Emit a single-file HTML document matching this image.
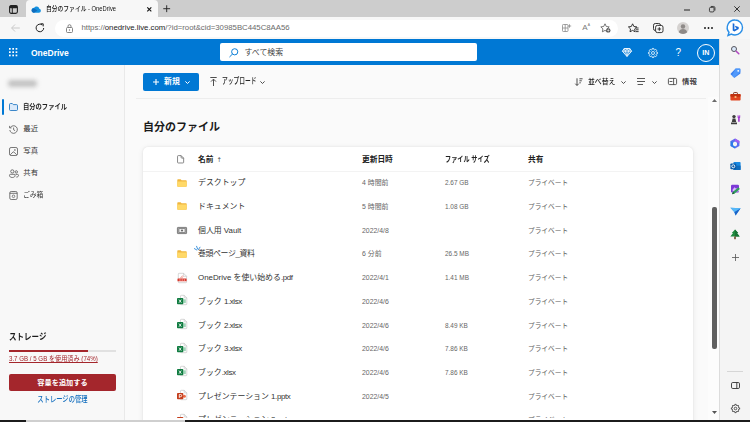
<!DOCTYPE html>
<html lang="ja">
<head>
<meta charset="utf-8">
<title>自分のファイル - OneDrive</title>
<style>
*{box-sizing:border-box;margin:0;padding:0}
html,body{width:750px;height:422px;overflow:hidden;background:#fafafa}
body{position:relative;font-family:"Liberation Sans","Noto Sans CJK JP",sans-serif;color:#242424;font-size:8px;line-height:1}
.a{position:absolute;white-space:nowrap}
.t{position:absolute;white-space:nowrap;line-height:10px;height:10px}
svg{position:absolute;overflow:visible}
.nk{display:inline-block;transform-origin:0 50%}

/* browser chrome */
#tabstrip{left:0;top:0;width:750px;height:17px;background:#cdcdcd}
#tab{left:26px;top:0;width:132px;height:18px;background:#f7f7f7;border-radius:4px 4px 0 0}
#toolbar{left:0;top:17px;width:750px;height:22px;background:#f7f7f7}
#addr{left:55px;top:19.5px;width:563px;height:17px;background:#fff;border-radius:8.5px}

/* onedrive */
#hdr{left:0;top:39px;width:719px;height:26px;background:#0078d4}
#search{left:220px;top:43px;width:257px;height:18px;background:#fff;border-radius:2px}
#nav{left:0;top:65px;width:125px;height:357px;background:#f8f8f8;border-right:1px solid #e9e9e9}
#main{left:125px;top:65px;width:594px;height:357px;background:#fafafa}
#card{left:143px;top:146.5px;width:550px;height:290px;background:#fff;border-radius:5px;box-shadow:0 0 2px rgba(0,0,0,.09),0 1px 6px rgba(0,0,0,.07)}
#edge{left:719px;top:39px;width:31px;height:383px;background:#f4f4f4;border-left:1px solid #dcdcdc}
#sb{left:708px;top:97px;width:11px;height:323px;background:#fcfcfc}
#thumb{left:712.3px;top:207px;width:4.8px;height:142px;background:#5f5f5f;border-radius:2px}
.name,.sec,.shr,.hd{margin-top:.8px}
.name{font-size:7.9px;color:#333}
.sec.sz{font-size:6.45px}
.lx{letter-spacing:-.36px}
.sec{font-size:6.9px;color:#666}
.shr{font-size:6.7px;color:#5c5c5c}
.hd{font-size:7.7px;font-weight:bold;color:#222}
.navt{font-size:7.4px;color:#333}
</style>
</head>
<body>

<!-- ============ Browser chrome ============ -->
<div class="a" id="tabstrip"></div>
<div class="a" id="tab"></div>
<div class="a" id="toolbar"></div>
<div class="a" id="addr"></div>

<!-- tab actions icon -->
<svg style="left:9px;top:5px" width="9" height="9" viewBox="0 0 9 9"><rect x=".6" y=".6" width="7.8" height="7.8" rx="1.6" fill="none" stroke="#222" stroke-width="1.1"/><rect x=".6" y=".6" width="7.8" height="2.6" rx="1.2" fill="#222"/><path d="M3.3 3v5.4" stroke="#222" stroke-width="1"/></svg>
<!-- onedrive cloud favicon -->
<svg style="left:31px;top:5.5px" width="10" height="7" viewBox="0 0 20 13"><path d="M5.2 12.8h10.6a4 4 0 0 0 .9-7.9A5.6 5.6 0 0 0 6.400 3.100 4.900 4.900 0 0 0 5.200 12.800z" fill="#1490df"/><path d="M1 8.600a4.200 4.200 0 0 1 5.400-4.000L13 8.500 6.000 12.800H5.200A4.200 4.200 0 0 1 1 8.600z" fill="#0f6cbd"/></svg>
<div class="t" style="left:46px;top:4px;font-size:6.8px;color:#111;font-weight:500"><span class="nk" id="tabtitle" style="transform:scaleX(.85)">自分のファイル - OneDrive</span></div>
<!-- tab close -->
<svg style="left:146.700px;top:6.700px" width="4.600" height="4.600" viewBox="0 0 5 5"><path d="M.3.3l4.400 4.400M4.700.3L.3 4.700" stroke="#111" stroke-width="1.200"/></svg>
<!-- new tab plus -->
<svg style="left:163.300px;top:5px" width="7.400" height="7.400" viewBox="0 0 8 8"><path d="M4 .3v7.400M.3 4h7.400" stroke="#222" stroke-width="1"/></svg>
<!-- window controls -->
<svg style="left:684px;top:8.500px" width="6" height="2" viewBox="0 0 6 2"><path d="M0 1h6" stroke="#333" stroke-width="1.100"/></svg>
<svg style="left:708.800px;top:5.800px" width="6.400" height="6.400" viewBox="0 0 7 7"><rect x=".5" y="1.500" width="5" height="5" rx="1.300" fill="none" stroke="#222" stroke-width=".9"/><path d="M2 .5h3a1.500 1.500 0 0 1 1.500 1.500v3" fill="none" stroke="#222" stroke-width=".9"/></svg>
<svg style="left:734px;top:6px" width="6" height="6" viewBox="0 0 6 6"><path d="M.3.3l5.400 5.400M5.700.3L.3 5.700" stroke="#222" stroke-width=".9"/></svg>

<!-- toolbar: back / reload -->
<svg style="left:11px;top:24px" width="9" height="8" viewBox="0 0 9 8"><path d="M4 .5L.6 4 4 7.500M.8 4h8" fill="none" stroke="#c9c9c9" stroke-width="1"/></svg>
<svg style="left:35px;top:23px" width="10" height="10" viewBox="0 0 10 10"><path d="M8.700 5A3.800 3.800 0 1 1 7.300 2" fill="none" stroke="#222" stroke-width="1"/><path d="M5.600.8h2.600v2.600" fill="none" stroke="#222" stroke-width="1"/></svg>
<!-- lock -->
<svg style="left:66px;top:23.500px" width="7" height="9" viewBox="0 0 7 9"><rect x=".5" y="3.500" width="6" height="5" rx="1" fill="none" stroke="#777" stroke-width=".9"/><path d="M2 3.500V2.200a1.500 1.500 0 0 1 3 0v1.300" fill="none" stroke="#777" stroke-width=".9"/><circle cx="3.500" cy="6" r=".7" fill="#777"/></svg>
<div class="t" id="url" style="left:81.500px;letter-spacing:-.015px;top:23px;font-size:7.800px;color:#6a6a6a">https://<span style="color:#1b1b1b">onedrive.live.com</span>/?id=root&amp;cid=30985BC445C8AA56</div>
<!-- addr right icons -->
<svg style="left:561.800px;top:24px" width="9" height="8" viewBox="0 0 9 8"><rect x=".5" y=".5" width="5.500" height="7" rx=".8" fill="none" stroke="#8a8a8a" stroke-width=".8"/><path d="M.5 4h5.500M3.200.5v7M7.500 .3v3.400M5.800 2h3.400" stroke="#8a8a8a" stroke-width=".8" fill="none"/></svg>
<div class="t" style="left:582.300px;top:23px;font-size:8px;color:#7a7a7a">A<span style="font-size:5px;position:relative;top:-3px">ᴬ</span></div>
<svg style="left:600px;top:23px" width="11" height="10" viewBox="0 0 11 10"><path d="M5 .8l1.300 2.700 2.900.4-2.100 2 .5 2.900L5 7.400 2.400 8.800l.5-2.900-2.100-2 2.900-.4z" fill="none" stroke="#555" stroke-width=".8"/><circle cx="8.300" cy="7.400" r="2.200" fill="#555"/><path d="M8.300 6.200v2.400M7.100 7.400h2.400" stroke="#fff" stroke-width=".6"/></svg>
<!-- favourites -->
<svg style="left:628px;top:23px" width="11" height="10" viewBox="0 0 11 10"><path d="M4.600.8l1.300 2.700 2.900.4-2.100 2 .5 2.900-2.600-1.400L2 8.800l.5-2.900-2.100-2 2.900-.4z" fill="none" stroke="#222" stroke-width=".9"/><path d="M7.600 5h3M7.900 6.800h2.700M8 8.600h2.600" stroke="#222" stroke-width=".9"/></svg>
<!-- collections -->
<svg style="left:653px;top:23px" width="11" height="10" viewBox="0 0 11 10"><rect x=".5" y=".5" width="7" height="7" rx="1.800" fill="none" stroke="#222" stroke-width=".9"/><rect x="2.600" y="2.400" width="7.400" height="7.200" rx="1.800" fill="#f7f7f7" stroke="#222" stroke-width=".9"/><path d="M6.300 4.200v3.600M4.500 6h3.600" stroke="#222" stroke-width=".9"/></svg>
<!-- profile -->
<svg style="left:677px;top:22px" width="12" height="12" viewBox="0 0 12 12"><circle cx="6" cy="6" r="6" fill="#d5d2d0"/><circle cx="6" cy="4.500" r="2.200" fill="#8e8a88"/><path d="M1.800 10.200a4.400 4.400 0 0 1 8.400 0A6 6 0 0 1 1.800 10.200z" fill="#8e8a88"/></svg>
<!-- ellipsis -->
<svg style="left:704px;top:27px" width="9" height="2" viewBox="0 0 9 2"><circle cx="1" cy="1" r=".95" fill="#111"/><circle cx="4.500" cy="1" r=".95" fill="#111"/><circle cx="8" cy="1" r=".95" fill="#111"/></svg>
<!-- bing -->
<svg style="left:726px;top:19px" width="18" height="18" viewBox="0 0 18 18"><path d="M9 1a7.500 7.500 0 0 1 0 15 7.500 7.500 0 0 1-3.600-.9L2 16.500l1-3.200A7.500 7.500 0 0 1 9 1z" fill="#fff" stroke="#2a8ee6" stroke-width="1.400"/><path d="M6.700 4.200l1.700.6v5.800l2.400-1.400-1.200-.6-.7-1.800 3.800 1.300v1.900l-4.300 2.500-1.700-1z" fill="#1769d6"/></svg>

<!-- ============ OneDrive ============ -->
<div class="a" id="hdr"></div>
<div class="a" id="search"></div>
<!-- waffle -->
<svg style="left:9px;top:48px" width="9" height="9" viewBox="0 0 9 9" fill="#fff"><rect x="0" y="0" width="1.700" height="1.700"/><rect x="3.300" y="0" width="1.700" height="1.700"/><rect x="6.600" y="0" width="1.700" height="1.700"/><rect x="0" y="3.300" width="1.700" height="1.700"/><rect x="3.300" y="3.300" width="1.700" height="1.700"/><rect x="6.600" y="3.300" width="1.700" height="1.700"/><rect x="0" y="6.600" width="1.700" height="1.700"/><rect x="3.300" y="6.600" width="1.700" height="1.700"/><rect x="6.600" y="6.600" width="1.700" height="1.700"/></svg>
<div class="t" id="brand" style="left:31px;top:47.500px;font-size:8.500px;font-weight:bold;color:#fff">OneDrive</div>
<!-- search icon + placeholder -->
<svg style="left:229px;top:48px" width="9.500" height="9.500" viewBox="0 0 8 8"><circle cx="4.800" cy="3.200" r="2.600" fill="none" stroke="#0078d4" stroke-width=".8"/><path d="M3 5L.4 7.600" stroke="#0078d4" stroke-width=".8"/></svg>
<div class="t" id="sph" style="left:244.500px;top:48px;font-size:7.900px;color:#444"><span class="nk" style="transform:scaleX(1)">すべて検索</span></div>
<!-- right header icons -->
<svg style="left:621.500px;top:48px" width="10" height="9" viewBox="0 0 10 9"><path d="M2.200.5h5.600L9.600 3.200 5 8.500.4 3.200z" fill="#fff" fill-opacity=".25" stroke="#fff" stroke-width=".9" stroke-linejoin="round"/><path d="M.4 3.200h9.200M3.400 3.200L5 8.300 6.600 3.200M2.200.5l1.200 2.700L5 .5l1.600 2.700L7.800.5" fill="none" stroke="#fff" stroke-width=".7" stroke-linejoin="round"/></svg>
<svg style="left:648px;top:47.500px" width="10" height="10" viewBox="0 0 10 10"><circle cx="5" cy="5" r="1.500" fill="none" stroke="#fff" stroke-width=".8"/><path d="M4.28 0.46L5.72 0.46L5.87 1.61L6.78 1.99L7.70 1.28L8.72 2.30L8.01 3.22L8.39 4.13L9.54 4.28L9.54 5.72L8.39 5.87L8.01 6.78L8.72 7.70L7.70 8.72L6.78 8.01L5.87 8.39L5.72 9.54L4.28 9.54L4.13 8.39L3.22 8.01L2.30 8.72L1.28 7.70L1.99 6.78L1.61 5.87L0.46 5.72L0.46 4.28L1.61 4.13L1.99 3.22L1.28 2.30L2.30 1.28L3.22 1.99L4.13 1.61z" fill="none" stroke="#fff" stroke-width=".8" stroke-linejoin="round"/></svg>
<div class="t" style="left:675.500px;top:47px;font-size:10px;color:#fff;line-height:11px;height:11px">?</div>
<div class="a" style="left:696.800px;top:43.500px;width:18px;height:18px;border:1px solid #fff;border-radius:50%"></div>
<div class="t" style="left:696.800px;top:47.600px;width:18px;text-align:center;font-size:7.100px;font-weight:bold;color:#fff">IN</div>
<div class="a" id="nav"></div>
<div class="a" style="left:8px;top:79.500px;width:29px;height:7px;background:#c2c2c2;filter:blur(2.200px);border-radius:3px"></div>
<div class="a" style="left:2px;top:99px;width:1.600px;height:15.500px;background:#0078d4;border-radius:1px"></div>
<svg style="left:9px;top:103px" width="9" height="8" viewBox="0 0 9 8"><path d="M.5 1.500a1 1 0 0 1 1-1h1.800l1 1.100h3.200a1 1 0 0 1 1 1v3.900a1 1 0 0 1-1 1h-6a1 1 0 0 1-1-1z" fill="#dbeafa" stroke="#0f6cbd" stroke-width=".8"/></svg>
<div class="t navt" style="left:23.300px;top:102px;font-weight:bold;color:#222;"><span class="nk" style="transform:scaleX(.85)">自分のファイル</span></div>
<svg style="left:9px;top:124.5px" width="9" height="9" viewBox="0 0 9 9"><path d="M1.300 2.600A3.800 3.800 0 1 1 .8 5" fill="none" stroke="#555" stroke-width=".8"/><path d="M.6.900v2h2M4.600 2.600v2.200l1.500.9" fill="none" stroke="#555" stroke-width=".8"/></svg>
<div class="t navt" style="left:23.300px;top:124px;"><span class="nk" style="transform:scaleX(1)">最近</span></div>
<svg style="left:9px;top:146.5px" width="9" height="9" viewBox="0 0 9 9"><rect x=".5" y=".5" width="8" height="8" rx="1.600" fill="none" stroke="#555" stroke-width=".8"/><circle cx="5.900" cy="3" r=".8" fill="#555"/><path d="M1.300 7.800l2.600-2.700a.8.800 0 0 1 1.100 0l2.700 2.700" fill="none" stroke="#555" stroke-width=".8"/></svg>
<div class="t navt" style="left:23.300px;top:146px;"><span class="nk" style="transform:scaleX(1)">写真</span></div>
<svg style="left:8.5px;top:168.5px" width="10" height="9" viewBox="0 0 10 9"><circle cx="3.300" cy="2.400" r="1.600" fill="none" stroke="#555" stroke-width=".8"/><circle cx="7.300" cy="2.900" r="1.200" fill="none" stroke="#555" stroke-width=".8"/><path d="M.5 6.300a1 1 0 0 1 1-1h3.600a1 1 0 0 1 1 1c0 1.400-1 2.200-2.800 2.200S.5 7.700.5 6.300zM6.600 5.400h1.900a1 1 0 0 1 1 1c0 1.100-.8 1.700-2.200 1.700" fill="none" stroke="#555" stroke-width=".8"/></svg>
<div class="t navt" style="left:23.300px;top:168px;"><span class="nk" style="transform:scaleX(1)">共有</span></div>
<svg style="left:9px;top:190.5px" width="9" height="9" viewBox="0 0 9 9"><rect x=".8" y=".5" width="7.400" height="8" rx="1.400" fill="none" stroke="#555" stroke-width=".8"/><path d="M.8 2.300h7.400" stroke="#555" stroke-width=".8"/><circle cx="4.500" cy="5.300" r="1.300" fill="none" stroke="#555" stroke-width=".7"/></svg>
<div class="t navt" style="left:23.300px;top:190px;"><span class="nk" style="transform:scaleX(0.92)">ごみ箱</span></div>
<div class="t" style="left:9px;top:332px;font-size:9px;font-weight:bold;color:#1b1b1b"><span class="nk" id="stg" style="transform:scaleX(.835)">ストレージ</span></div>
<div class="a" style="left:9px;top:350.300px;width:107px;height:1.400px;background:#e1e1e1"></div>
<div class="a" style="left:9px;top:350.300px;width:79px;height:1.400px;background:#a4262c"></div>
<div class="t" id="usage" style="left:9px;top:354px;font-size:6.500px;color:#a4262c"><span class="nk" style="transform:scaleX(.945);text-decoration:underline;text-decoration-thickness:.5px;text-underline-offset:.6px">3.7 GB / 5 GB を使用済み (74%)</span></div>
<div class="a" style="left:9px;top:373.700px;width:107px;height:17.200px;background:#a4262c;border-radius:2px"></div>
<div class="t" id="addcap" style="left:9px;top:377.500px;width:107px;text-align:center;font-size:7.200px;font-weight:bold;color:#fff">容量を追加する</div>
<div class="t" id="mng" style="left:9px;top:394.300px;width:107px;text-align:center;font-size:8.400px;color:#0f6cbd;font-weight:500"><span class="nk" style="transform:scaleX(.75);transform-origin:50% 50%">ストレージの管理</span></div>
<div class="a" id="main"></div>
<div class="a" style="left:136px;top:97.500px;width:570px;height:1px;background:#ededed"></div>
<!-- new button -->
<div class="a" style="left:143px;top:73px;width:56px;height:17.500px;background:#0078d4;border-radius:2px"></div>
<svg style="left:152.500px;top:78.500px" width="6" height="6" viewBox="0 0 6 6"><path d="M3 0v6M0 3h6" stroke="#fff" stroke-width="1.100"/></svg>
<div class="t" id="newt" style="left:164px;top:76.500px;font-size:7.900px;font-weight:bold;color:#fff">新規</div>
<svg style="left:185px;top:80.500px" width="5" height="3" viewBox="0 0 5 3"><path d="M.4.4l2.100 2.100L4.600.4" fill="none" stroke="#fff" stroke-width="1"/></svg>
<!-- upload -->
<svg style="left:209.500px;top:77px" width="7" height="9" viewBox="0 0 7 9"><path d="M.3.500h6.400M3.500 9V2.300M1 4.600l2.500-2.500L6 4.600" fill="none" stroke="#444" stroke-width=".95"/></svg>
<div class="t" id="upl" style="left:222px;top:76.300px;font-size:8.600px;color:#222;font-weight:500"><span class="nk" style="transform:scaleX(.67)">アップロード</span></div>
<svg style="left:260px;top:80.500px" width="5" height="3" viewBox="0 0 5 3"><path d="M.4.400l2.100 2.100L4.600.4" fill="none" stroke="#444" stroke-width=".95"/></svg>
<!-- sort -->
<svg style="left:575px;top:77.500px" width="8" height="8" viewBox="0 0 8 8"><path d="M2 .3v7M.3 5.700L2 7.500l1.700-1.800M4.400.8h3.200M4.400 2.800h2.400M4.400 4.800h1.400" fill="none" stroke="#444" stroke-width=".95"/></svg>
<div class="t" id="sortt" style="left:588px;top:76.500px;font-size:7.400px;color:#222;font-weight:500"><span class="nk" style="transform:scaleX(.93)">並べ替え</span></div>
<svg style="left:620.500px;top:80.500px" width="5" height="3" viewBox="0 0 5 3"><path d="M.4.400l2.100 2.100L4.600.4" fill="none" stroke="#444" stroke-width=".95"/></svg>
<!-- view -->
<svg style="left:637px;top:78px" width="8" height="7" viewBox="0 0 8 7"><path d="M0 .5h8M0 3.500h8M.6 6.500h5.400" stroke="#444" stroke-width=".9"/></svg>
<svg style="left:651.500px;top:80.500px" width="5" height="3" viewBox="0 0 5 3"><path d="M.4.400l2.100 2.100L4.600.4" fill="none" stroke="#444" stroke-width=".95"/></svg>
<!-- info -->
<svg style="left:668px;top:78px" width="9" height="7" viewBox="0 0 9 7"><rect x=".4" y=".4" width="8.200" height="6.200" rx="1.200" fill="none" stroke="#333" stroke-width=".8"/><path d="M5.600.4v6.200M1.600 3.500h2.800" stroke="#333" stroke-width=".8"/></svg>
<div class="t" id="infot" style="left:682px;top:76.500px;font-size:7.400px;color:#222;font-weight:500">情報</div>
<!-- page title -->
<div class="t" id="ttl" style="left:143px;top:119.500px;font-size:11px;font-weight:bold;color:#1b1b1b;line-height:15px;height:15px">自分のファイル</div>
<div class="a" id="card"></div>
<div class="a" style="left:143px;top:170.500px;width:550px;height:1px;background:#f3f3f3"></div>
<svg style="left:177.200px;top:154.800px" width="7.200" height="8.600" viewBox="0 0 8 9"><path d="M1.400.4h3.200L7.400 3.200v4.600a.8.800 0 0 1-.8.800H1.400a.8.800 0 0 1-.8-.8V1.200a.8.800 0 0 1 .8-.8zM4.600.4v2a.8.800 0 0 0 .8.800h2" fill="none" stroke="#6e6e6e" stroke-width=".9"/></svg>
<div class="t hd" style="left:198px;top:154px">名前<span style="font-family:'DejaVu Sans',sans-serif;font-weight:normal;color:#555;font-size:6.500px;margin-left:3px;position:relative;top:-.2px">↑</span></div>
<div class="t hd" style="left:362px;top:154px">更新日時</div>
<div class="t hd" id="hsize" style="left:445px;top:154px"><span class="nk" style="transform:scaleX(.8)">ファイル サイズ</span></div>
<div class="t hd" style="left:528px;top:154px">共有</div>
<svg style="left:177px;top:178.6px" width="10" height="8" viewBox="0 0 10 8"><path d="M.3 1a.7.700 0 0 1 .7-.7h2.600l1 1H9a.7.700 0 0 1 .7.700v5a.7.700 0 0 1-.7.700H1a.7.700 0 0 1-.7-.7z" fill="#f0b63e"/><path d="M.3 2.600h9.400V7a.7.700 0 0 1-.7.700H1A.7.700 0 0 1 .3 7z" fill="#ffd968"/></svg>
<div class="t name r0" style="left:198px;top:177.6px">デスクトップ</div><div class="t sec" style="left:362px;top:177.6px">4 時間前</div><div class="t sec sz" style="left:445px;top:177.6px">2.67 GB</div><div class="t shr" style="left:528px;top:177.6px">プライベート</div>
<svg style="left:177px;top:202.3px" width="10" height="8" viewBox="0 0 10 8"><path d="M.3 1a.7.700 0 0 1 .7-.7h2.600l1 1H9a.7.700 0 0 1 .7.700v5a.7.700 0 0 1-.7.700H1a.7.700 0 0 1-.7-.7z" fill="#f0b63e"/><path d="M.3 2.600h9.400V7a.7.700 0 0 1-.7.700H1A.7.700 0 0 1 .3 7z" fill="#ffd968"/></svg>
<div class="t name r1" style="left:198px;top:201.3px">ドキュメント</div><div class="t sec" style="left:362px;top:201.3px">5 時間前</div><div class="t sec sz" style="left:445px;top:201.3px">1.08 GB</div><div class="t shr" style="left:528px;top:201.3px">プライベート</div>
<svg style="left:177px;top:226.5px" width="10" height="7" viewBox="0 0 10 7"><rect x=".4" y=".4" width="9.200" height="6.200" rx=".5" fill="#a9a9a9" stroke="#6a6a6a" stroke-width=".8"/><rect x="2" y="1.700" width="6" height="3.600" fill="#f1f1f1" stroke="#6a6a6a" stroke-width=".6"/><circle cx="5" cy="3.500" r="1.100" fill="#6a6a6a"/></svg>
<div class="t name r2" style="left:198px;top:225.0px">個人用 Vault</div><div class="t sec" style="left:362px;top:225.0px">2022/4/8</div><div class="t shr" style="left:528px;top:225.0px">プライベート</div>
<svg style="left:177px;top:249.7px" width="10" height="8" viewBox="0 0 10 8"><path d="M.3 1a.7.700 0 0 1 .7-.7h2.600l1 1H9a.7.700 0 0 1 .7.700v5a.7.700 0 0 1-.7.700H1a.7.700 0 0 1-.7-.7z" fill="#f0b63e"/><path d="M.3 2.600h9.400V7a.7.700 0 0 1-.7.700H1A.7.700 0 0 1 .3 7z" fill="#ffd968"/></svg>
<div class="t name r3" style="left:198px;top:248.7px"><span style="letter-spacing:-.38px">巻頭ページ_資料</span></div><div class="t sec" style="left:362px;top:248.7px">6 分前</div><div class="t sec sz" style="left:445px;top:248.7px">26.5 MB</div><div class="t shr" style="left:528px;top:248.7px">プライベート</div>
<svg style="left:176.7px;top:272.7px" width="10" height="10" viewBox="0 0 10 10"><path d="M2 .3h4.600L9.600 3.300v5.700a.7.700 0 0 1-.7.700H2a.7.700 0 0 1-.7-.7V1A.7.700 0 0 1 2 .3z" fill="#fff" stroke="#bdbdbd" stroke-width=".6"/><path d="M6.600.3v2.300a.7.700 0 0 0 .7.700h2.300" fill="none" stroke="#bdbdbd" stroke-width=".6"/><path d="M3.600 5c.6-1.900 2.100-2.500 2.500-1.800.4.700-.8 1.800-2.500 1.800z" fill="none" stroke="#e0685f" stroke-width=".5"/><rect x=".5" y="5.600" width="9.100" height="2.700" rx=".5" fill="#d9382c"/><path d="M2.400 7h1.200M4.600 7h1.200M6.800 7H8" stroke="#fff" stroke-width=".8"/></svg>
<div class="t name r4" style="left:198px;top:272.4px">OneDrive を使い始める<span class="lx">.pdf</span></div><div class="t sec" style="left:362px;top:272.4px">2022/4/1</div><div class="t sec sz" style="left:445px;top:272.4px">1.41 MB</div><div class="t shr" style="left:528px;top:272.4px">プライベート</div>
<svg style="left:176.7px;top:295.3px" width="10" height="10" viewBox="0 0 10 10"><path d="M4.200.3h3L9.800 2.900v6.100a.7.700 0 0 1-.7.700H4.200a.7.700 0 0 1-.7-.7V1a.7.700 0 0 1 .7-.7z" fill="#fff" stroke="#bdbdbd" stroke-width=".6"/><path d="M7.200.3v1.900a.7.700 0 0 0 .7.700h1.900" fill="none" stroke="#bdbdbd" stroke-width=".6"/><rect x="6.400" y="4.300" width="2.400" height="3.800" fill="#9fd5b7"/><rect x="0" y="3" width="6.300" height="6.300" rx=".8" fill="#107c41"/><path d="M2 4.600l2.300 3.100M4.300 4.600L2 7.700" stroke="#fff" stroke-width=".85"/></svg>
<div class="t name r5" style="left:198px;top:296.1px">ブック <span class="lx">1.xlsx</span></div><div class="t sec" style="left:362px;top:296.1px">2022/4/6</div><div class="t shr" style="left:528px;top:296.1px">プライベート</div>
<svg style="left:176.7px;top:319.0px" width="10" height="10" viewBox="0 0 10 10"><path d="M4.200.3h3L9.800 2.900v6.100a.7.700 0 0 1-.7.700H4.200a.7.700 0 0 1-.7-.7V1a.7.700 0 0 1 .7-.7z" fill="#fff" stroke="#bdbdbd" stroke-width=".6"/><path d="M7.200.3v1.900a.7.700 0 0 0 .7.700h1.900" fill="none" stroke="#bdbdbd" stroke-width=".6"/><rect x="6.400" y="4.300" width="2.400" height="3.800" fill="#9fd5b7"/><rect x="0" y="3" width="6.300" height="6.300" rx=".8" fill="#107c41"/><path d="M2 4.600l2.300 3.100M4.300 4.600L2 7.700" stroke="#fff" stroke-width=".85"/></svg>
<div class="t name r6" style="left:198px;top:319.8px">ブック <span class="lx">2.xlsx</span></div><div class="t sec" style="left:362px;top:319.8px">2022/4/6</div><div class="t sec sz" style="left:445px;top:319.8px">8.49 KB</div><div class="t shr" style="left:528px;top:319.8px">プライベート</div>
<svg style="left:176.7px;top:342.7px" width="10" height="10" viewBox="0 0 10 10"><path d="M4.200.3h3L9.800 2.900v6.100a.7.700 0 0 1-.7.700H4.200a.7.700 0 0 1-.7-.7V1a.7.700 0 0 1 .7-.7z" fill="#fff" stroke="#bdbdbd" stroke-width=".6"/><path d="M7.200.3v1.900a.7.700 0 0 0 .7.700h1.900" fill="none" stroke="#bdbdbd" stroke-width=".6"/><rect x="6.400" y="4.300" width="2.400" height="3.800" fill="#9fd5b7"/><rect x="0" y="3" width="6.300" height="6.300" rx=".8" fill="#107c41"/><path d="M2 4.600l2.300 3.100M4.300 4.600L2 7.700" stroke="#fff" stroke-width=".85"/></svg>
<div class="t name r7" style="left:198px;top:343.5px">ブック <span class="lx">3.xlsx</span></div><div class="t sec" style="left:362px;top:343.5px">2022/4/6</div><div class="t sec sz" style="left:445px;top:343.5px">7.86 KB</div><div class="t shr" style="left:528px;top:343.5px">プライベート</div>
<svg style="left:176.7px;top:366.4px" width="10" height="10" viewBox="0 0 10 10"><path d="M4.200.3h3L9.800 2.900v6.100a.7.700 0 0 1-.7.700H4.200a.7.700 0 0 1-.7-.7V1a.7.700 0 0 1 .7-.7z" fill="#fff" stroke="#bdbdbd" stroke-width=".6"/><path d="M7.200.3v1.900a.7.700 0 0 0 .7.700h1.900" fill="none" stroke="#bdbdbd" stroke-width=".6"/><rect x="6.400" y="4.300" width="2.400" height="3.800" fill="#9fd5b7"/><rect x="0" y="3" width="6.300" height="6.300" rx=".8" fill="#107c41"/><path d="M2 4.600l2.300 3.100M4.300 4.600L2 7.700" stroke="#fff" stroke-width=".85"/></svg>
<div class="t name r8" style="left:198px;top:367.2px">ブック<span class="lx">.xlsx</span></div><div class="t sec" style="left:362px;top:367.2px">2022/4/6</div><div class="t sec sz" style="left:445px;top:367.2px">7.86 KB</div><div class="t shr" style="left:528px;top:367.2px">プライベート</div>
<svg style="left:176.7px;top:390.1px" width="10" height="10" viewBox="0 0 10 10"><path d="M4.200.3h3L9.800 2.900v6.100a.7.700 0 0 1-.7.700H4.200a.7.700 0 0 1-.7-.7V1a.7.700 0 0 1 .7-.7z" fill="#fff" stroke="#bdbdbd" stroke-width=".6"/><path d="M7.200.3v1.900a.7.700 0 0 0 .7.700h1.900" fill="none" stroke="#bdbdbd" stroke-width=".6"/><circle cx="7.400" cy="6.200" r="1.500" fill="#ed6c47"/><rect x="0" y="3" width="6.300" height="6.300" rx=".8" fill="#c43e1c"/><path d="M2.300 7.900V4.500h1.300a1.100 1.100 0 0 1 0 2.200H2.300" fill="none" stroke="#fff" stroke-width=".85"/></svg>
<div class="t name r9" style="left:198px;top:390.9px">プレゼンテーション <span class="lx">1.pptx</span></div><div class="t sec" style="left:362px;top:390.9px">2022/4/5</div><div class="t shr" style="left:528px;top:390.9px">プライベート</div>
<svg style="left:176.7px;top:413.8px" width="10" height="10" viewBox="0 0 10 10"><path d="M4.200.3h3L9.800 2.900v6.100a.7.700 0 0 1-.7.700H4.200a.7.700 0 0 1-.7-.7V1a.7.700 0 0 1 .7-.7z" fill="#fff" stroke="#bdbdbd" stroke-width=".6"/><path d="M7.200.3v1.900a.7.700 0 0 0 .7.700h1.900" fill="none" stroke="#bdbdbd" stroke-width=".6"/><circle cx="7.400" cy="6.200" r="1.500" fill="#ed6c47"/><rect x="0" y="3" width="6.300" height="6.300" rx=".8" fill="#c43e1c"/><path d="M2.300 7.900V4.500h1.300a1.100 1.100 0 0 1 0 2.200H2.300" fill="none" stroke="#fff" stroke-width=".85"/></svg>
<div class="t name r10" style="left:198px;top:414.6px">プレゼンテーション <span class="lx">2.pptx</span></div><div class="t shr" style="left:528px;top:414.6px">プライベート</div>
<svg style="left:194px;top:246px" width="7" height="7" viewBox="0 0 7 7"><path d="M.4 2.600l2.400 1.400M2.600.3l1 2.700M6 1.200L4.400 3.600" stroke="#2b88d8" stroke-width=".9" stroke-linecap="round"/></svg>
<div class="a" id="sb"></div>
<div class="a" id="thumb"></div>
<div class="a" id="edge"></div>
<svg style="left:730.0px;top:45.4px" width="10" height="10" viewBox="0 0 10 10"><circle cx="4" cy="4" r="2.500" fill="#dbe9fa" stroke="#55555f" stroke-width="1"/><path d="M6.200 6.200l2.600 2.600" stroke="#b146c2" stroke-width="1.500" stroke-linecap="round"/></svg>
<svg style="left:729.5px;top:68.4px" width="11" height="10" viewBox="0 0 11 10"><path d="M5.600.6h4a.8.800 0 0 1 .8.800v4L5 9.600a.8.800 0 0 1-1.100 0L.8 6.500a.8.800 0 0 1 0-1.100z" fill="#3b82f0"/><path d="M5.600.6h4a.8.800 0 0 1 .8.800v2.400L4.200 9.800 2 7.700z" fill="#5aa2ff" opacity=".7"/><circle cx="8.200" cy="2.800" r=".9" fill="#fff"/></svg>
<svg style="left:729.5px;top:91.9px" width="11" height="9" viewBox="0 0 11 9"><path d="M3.600 2V1.200a.7.700 0 0 1 .7-.7h2.400a.7.700 0 0 1 .7.700V2" fill="none" stroke="#7a2a12" stroke-width=".9"/><rect x=".4" y="2" width="10.200" height="6.600" rx="1" fill="#e0451f"/><rect x=".4" y="2" width="10.200" height="2.800" rx="1" fill="#c0320f"/><rect x="4.600" y="4.200" width="1.800" height="1.600" fill="#ffd08a"/></svg>
<svg style="left:729.5px;top:113.9px" width="11" height="11" viewBox="0 0 11 11"><circle cx="4" cy="2.600" r="1.700" fill="#3d3d3d"/><path d="M2.600 4.400h2.800l.8 3.600H1.800zM1 8.400h6v1.800H1z" fill="#3d3d3d"/><path d="M7.600 1.200h.9v1.300h.8V1.200h.9v2.400l-.5.600v3.600H8.100V4.200l-.5-.6z" fill="#a33ad1"/></svg>
<svg style="left:730.0px;top:137.9px" width="10" height="11" viewBox="0 0 10 11"><path d="M5 .4l4.400 2.500v5.200L5 10.600.6 8.100V2.900z" fill="#5a6ef0"/><path d="M5 .4l4.400 2.500v2.600L5 3z" fill="#a35bf0"/><path d="M.6 2.900L5 5.500v5.100L.6 8.100z" fill="#2b7be8"/><path d="M5 3.600l2 1.200v2.400l-2 1.200-2-1.200V4.800z" fill="#f4f4f4"/></svg>
<svg style="left:729.5px;top:161.4px" width="11" height="10" viewBox="0 0 11 10"><rect x="3.400" y="1" width="7.200" height="8" rx=".8" fill="#1a8ae2"/><path d="M3.400 4.600h7.200V9H3.400z" fill="#0f6cbd"/><rect x=".4" y="2.400" width="5.800" height="5.800" rx=".8" fill="#0a5ba8"/><circle cx="3.300" cy="5.300" r="1.500" fill="none" stroke="#fff" stroke-width=".9"/></svg>
<svg style="left:729.5px;top:183.9px" width="11" height="11" viewBox="0 0 11 11"><rect x="1" y=".8" width="8" height="7.600" rx="1.200" fill="#7d3ad6"/><path d="M2.600 5.400l2-2.200 1.600 1.600 1.200-1 1.600 2.200v1.600H2.600z" fill="#d8b7ff"/><path d="M2 10.300l1-2.600 5.400-4.400 1.500 1.700-5.300 4.500z" fill="#2f9e5b"/><path d="M2 10.300l1-2.600 1.600 1.800z" fill="#1f5e39"/></svg>
<svg style="left:729.5px;top:206.9px" width="11" height="9" viewBox="0 0 11 9"><path d="M.4.800l10.200.4-5 7.400-1.300-3.700z" fill="#3aa0ef"/><path d="M10.600 1.200L4.300 4.900l1.300 3.700z" fill="#1b63c7"/><path d="M.4.800l3.900 4.100 6.300-3.700z" fill="#57b7f7"/></svg>
<svg style="left:730.0px;top:228.9px" width="10" height="11" viewBox="0 0 10 11"><path d="M5 .4l3.200 3.600H7l2.600 3.400H.4L3 4H1.800z" fill="#1f8a3e"/><path d="M5 .4l3.200 3.600H7l2.600 3.400H5z" fill="#167233"/><rect x="4.200" y="7.400" width="1.600" height="2.800" fill="#6b4a2a"/></svg>
<svg style="left:731.5px;top:253.9px" width="7" height="7" viewBox="0 0 7 7"><path d="M3.500 0v7M0 3.500h7" stroke="#555" stroke-width=".8"/></svg>
<div class="a" style="left:727px;top:371px;width:15.500px;height:1px;background:#d6d6d6"></div>
<svg style="left:730.5px;top:381.5px" width="9" height="7" viewBox="0 0 9 7"><rect x=".5" y=".5" width="8" height="6" rx="1.300" fill="none" stroke="#333" stroke-width=".9"/><path d="M5.800.5v6" stroke="#333" stroke-width=".9"/></svg>
<svg style="left:730.5px;top:403.5px" width="9" height="9" viewBox="0 0 9 9"><circle cx="4.500" cy="4.500" r="1.300" fill="none" stroke="#333" stroke-width=".8"/><path d="M3.84 0.35L5.16 0.35L5.30 1.40L6.13 1.75L6.97 1.10L7.90 2.03L7.25 2.87L7.60 3.70L8.65 3.84L8.65 5.16L7.60 5.30L7.25 6.13L7.90 6.97L6.97 7.90L6.13 7.25L5.30 7.60L5.16 8.65L3.84 8.65L3.70 7.60L2.87 7.25L2.03 7.90L1.10 6.97L1.75 6.13L1.40 5.30L0.35 5.16L0.35 3.84L1.40 3.70L1.75 2.87L1.10 2.03L2.03 1.10L2.87 1.75L3.70 1.40z" fill="none" stroke="#333" stroke-width=".8" stroke-linejoin="round"/></svg>
<svg style="left:711.500px;top:99px" width="5" height="3" viewBox="0 0 5 3"><path d="M0 3L2.500 0 5 3z" fill="#6a6a6a"/></svg>
<svg style="left:712px;top:411px" width="5" height="3" viewBox="0 0 5 3"><path d="M0 0l2.500 3L5 0z" fill="#555"/></svg>

<!-- bottom line -->
<div class="a" style="left:143px;top:418px;width:550px;height:3px;background:#fff"></div>
<div class="a" style="left:0;top:420.400px;width:750px;height:2px;background:#1c1c1c"></div>
<div class="a" style="left:26px;top:420.400px;width:159px;height:2px;background:#cfcfcf"></div>

</body>
</html>
